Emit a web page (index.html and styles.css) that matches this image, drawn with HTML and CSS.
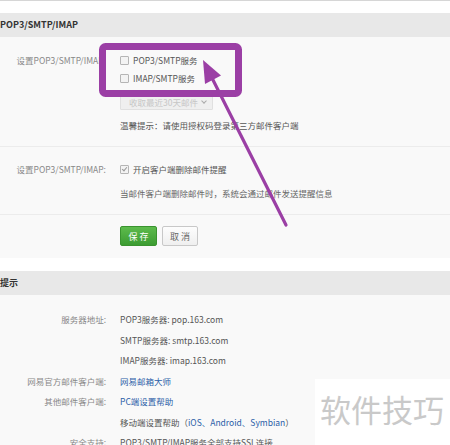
FILE: index.html
```html
<!DOCTYPE html>
<html lang="zh">
<head>
<meta charset="utf-8">
<link rel="stylesheet" href="styles.css">
</head>
<body>
<div class="page">
  <div class="top-gap"></div>
  <div class="sec-head">POP3/SMTP/IMAP</div>
  <div class="sec-body">
    <div class="form-row r1">
      <div class="label">设置POP3/SMTP/IMAP:</div>
      <div class="field">
        <div class="line"><span class="cb"></span>POP3/SMTP服务</div>
        <div class="line"><span class="cb"></span>IMAP/SMTP服务</div>
        <div class="select">收取最近30天邮件<span class="chev"></span></div>
        <div class="line tip">温馨提示：请使用授权码登录第三方邮件客户端</div>
      </div>
    </div>
    <div class="form-row r2">
      <div class="label">设置POP3/SMTP/IMAP:</div>
      <div class="field">
        <div class="line"><span class="cb checked"></span>开启客户端删除邮件提醒</div>
        <div class="line desc">当邮件客户端删除邮件时，系统会通过邮件发送提醒信息</div>
      </div>
    </div>
    <div class="form-row r3">
      <div class="label"></div>
      <div class="field buttons">
        <span class="btn save">保 存</span>
        <span class="btn cancel">取 消</span>
      </div>
    </div>
  </div>
  <div class="mid-gap"></div>
  <div class="sec-head">提示</div>
  <div class="sec-body info">
    <div class="info-grid">
      <div class="ilabel">服务器地址:</div><div class="ival">POP3服务器: pop.163.com</div>
      <div class="ilabel"></div><div class="ival">SMTP服务器: smtp.163.com</div>
      <div class="ilabel"></div><div class="ival">IMAP服务器: imap.163.com</div>
      <div class="ilabel">网易官方邮件客户端:</div><div class="ival link">网易邮箱大师</div>
      <div class="ilabel">其他邮件客户端:</div><div class="ival link">PC端设置帮助</div>
      <div class="ilabel"></div><div class="ival">移动端设置帮助（<span class="link">iOS、Android、Symbian</span>）</div>
      <div class="ilabel">安全支持:</div><div class="ival">POP3/SMTP/IMAP服务全部支持SSL连接</div>
    </div>
  </div>

  <svg class="annot" width="450" height="445" viewBox="0 0 450 445">
    <rect x="102.5" y="46.5" width="136" height="47" rx="3" ry="3" fill="none" stroke="#9b3fa5" stroke-width="7"/>
    <line x1="211" y1="76" x2="286" y2="225" stroke="#9b3fa5" stroke-width="3.2" stroke-linecap="round"/>
    <polygon points="203,60 221,75.5 205,84" fill="#9b3fa5"/>
  </svg>

  <div class="watermark">软件技巧</div>
</div>
</body>
</html>
```

FILE: styles.css
```css
html, body {
  margin: 0;
  padding: 0;
  background: #ffffff;
}
.page {
  position: relative;
  width: 450px;
  height: 445px;
  overflow: hidden;
  font-family: "Noto Sans CJK SC", "Microsoft YaHei", sans-serif;
  font-size: 8.5px;
  color: #555555;
  border-top: 1px solid #d6d6d6;
  box-sizing: border-box;
}
.top-gap {
  height: 12px;
  background: #ffffff;
}
.mid-gap {
  height: 13px;
  background: #ffffff;
}
.sec-head {
  height: 24px;
  line-height: 24px;
  background: #e8e8e8;
  font-weight: bold;
  color: #333333;
  font-size: 9px;
  padding-left: 0;
}
.sec-body {
  background: #f9f9f9;
}
.form-row {
  display: grid;
  grid-template-columns: 106px 1fr;
  column-gap: 14px;
  border-bottom: 1px solid #ececec;
}
.r1 {
  padding: 14px 0 12px;
}
.r2 {
  padding: 13px 0 12px;
}
.r3 {
  padding: 11px 0 12px;
  border-bottom: none;
}
.label {
  text-align: right;
  line-height: 18px;
  color: #888888;
  white-space: nowrap;
}
.field {
  display: flex;
  flex-direction: column;
  align-items: flex-start;
}
.line {
  height: 18px;
  line-height: 18px;
  display: flex;
  align-items: center;
  white-space: nowrap;
}
.cb {
  width: 7px;
  height: 7px;
  border: 1px solid #b5b5b5;
  background: #f3f3f3;
  border-radius: 1px;
  margin-right: 4px;
  position: relative;
}
.cb.checked::after {
  content: "";
  position: absolute;
  left: 2px;
  top: 0px;
  width: 2px;
  height: 4px;
  border-right: 1px solid #999;
  border-bottom: 1px solid #999;
  transform: rotate(40deg);
}
.select {
  margin-top: 7px;
  width: 91px;
  height: 14px;
  line-height: 14px;
  border: 1px solid #e0e0e0;
  background: #efefef;
  color: #c6c6c6;
  padding-left: 8px;
  box-sizing: content-box;
  position: relative;
  border-radius: 1px;
  width: 83px;
}
.chev {
  position: absolute;
  right: 6px;
  top: 4px;
  width: 3px;
  height: 3px;
  border-right: 1px solid #aaa;
  border-bottom: 1px solid #aaa;
  transform: rotate(45deg);
}
.tip {
  margin-top: 6px;
  color: #555555;
}
.desc {
  margin-top: 6px;
  color: #666666;
}
.buttons {
  flex-direction: row;
  gap: 5px;
}
.btn {
  height: 20px;
  line-height: 20px;
  box-sizing: border-box;
  text-align: center;
  border-radius: 2px;
  font-size: 9px;
}
.save {
  width: 37px;
  background: linear-gradient(#5dbb4c, #3c9c32);
  border: 1px solid #3a932f;
  color: #ffffff;
}
.cancel {
  width: 36px;
  background: linear-gradient(#fdfdfd, #efefef);
  border: 1px solid #c8c8c8;
  color: #666666;
}
.info {
  padding-top: 14px;
  height: 200px;
}
.info-grid {
  display: grid;
  grid-template-columns: 106px 1fr;
  column-gap: 14px;
  grid-auto-rows: 20.5px;
  line-height: 20.5px;
}
.ilabel {
  text-align: right;
  color: #888888;
  white-space: nowrap;
}
.ival {
  color: #555555;
  white-space: nowrap;
}
.link {
  color: #2b5ea8;
}
.annot {
  position: absolute;
  left: 0;
  top: -1px;
  pointer-events: none;
}
.watermark {
  position: absolute;
  left: 315px;
  top: 378px;
  right: 0;
  bottom: 0;
  background: rgba(255, 255, 255, 0.92);
  color: #c9c9c9;
  font-size: 31px;
  line-height: 60px;
  padding-left: 5px;
  letter-spacing: 0;
  white-space: nowrap;
}
```
